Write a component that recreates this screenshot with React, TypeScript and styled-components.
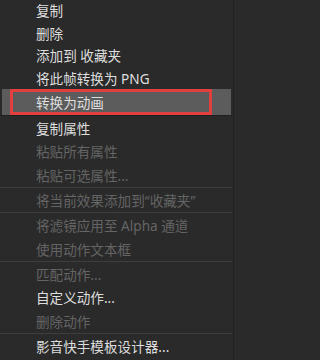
import React from "react";
import styled, { createGlobalStyle } from "styled-components";

const GlobalStyle = createGlobalStyle`
  html, body {
    margin: 0;
    padding: 0;
    background: #2a2a2a;
  }
  body {
    font-family: "Noto Sans", "Noto Sans CJK SC", sans-serif;
  }
`;

const Menu = styled.div`
  width: 234px;
  height: 360px;
  overflow: hidden;
  background: #2a2a2a;
  border-right: 1px solid #222;
  box-sizing: border-box;
  display: flex;
  flex-flow: column nowrap;
`;

const Group = styled.div<{ $row: number; $offset?: number }>`
  display: flex;
  flex-flow: column nowrap;
  margin-top: ${(p) => p.$offset || 0}px;
  --row: ${(p) => p.$row}px;
`;

const Item = styled.div<{ $disabled?: boolean; $active?: boolean }>`
  position: relative;
  display: flex;
  align-items: center;
  height: ${(p) => (p.$active ? "26px" : "var(--row)")};
  flex: none;
  margin: 0 2px;
  padding-left: 34px;
  font-size: 13.6px;
  white-space: nowrap;
  color: ${(p) => (p.$disabled ? "#646464" : "#dedede")};
  background: ${(p) => (p.$active ? "#5c5c5c" : "transparent")};
`;

const Separator = styled.div<{ $dark?: boolean }>`
  height: 1px;
  flex: none;
  margin-right: 1px;
  background: ${(p) => (p.$dark ? "#202020" : "#3e3e3e")};
`;

const Marker = styled.div`
  position: absolute;
  left: 8px;
  top: 0;
  width: 202px;
  height: 26px;
  box-sizing: border-box;
  border: 3px solid #e2403e;
  pointer-events: none;
`;

type Entry = { label: string; disabled?: boolean; active?: boolean };

const groups: { row: number; offset?: number; items: Entry[] }[] = [
  {
    row: 22.5,
    offset: -1,
    items: [
      { label: "复制" },
      { label: "删除" },
      { label: "添加到 收藏夹" },
      { label: "将此帧转换为 PNG" },
      { label: "转换为动画", active: true },
    ],
  },
  {
    row: 23.6,
    items: [
      { label: "复制属性" },
      { label: "粘贴所有属性", disabled: true },
      { label: "粘贴可选属性...", disabled: true },
    ],
  },
  {
    row: 24,
    items: [{ label: "将当前效果添加到“收藏夹”", disabled: true }],
  },
  {
    row: 24,
    items: [
      { label: "将滤镜应用至 Alpha 通道", disabled: true },
      { label: "使用动作文本框", disabled: true },
    ],
  },
  {
    row: 23.6,
    items: [
      { label: "匹配动作...", disabled: true },
      { label: "自定义动作..." },
      { label: "删除动作", disabled: true },
    ],
  },
  {
    row: 24,
    items: [{ label: "影音快手模板设计器..." }],
  },
];

const App = () => {
  return (
    <>
      <GlobalStyle />
      <Menu>
        {groups.map((g, gi) => (
          <React.Fragment key={gi}>
            {gi > 0 && <Separator $dark={gi === 1} />}
            <Group $row={g.row} $offset={g.offset}>
              {g.items.map((it) => (
                <Item key={it.label} $disabled={it.disabled} $active={it.active}>
                  {it.label}
                  {it.active && <Marker />}
                </Item>
              ))}
            </Group>
          </React.Fragment>
        ))}
      </Menu>
    </>
  );
};

export default App;
